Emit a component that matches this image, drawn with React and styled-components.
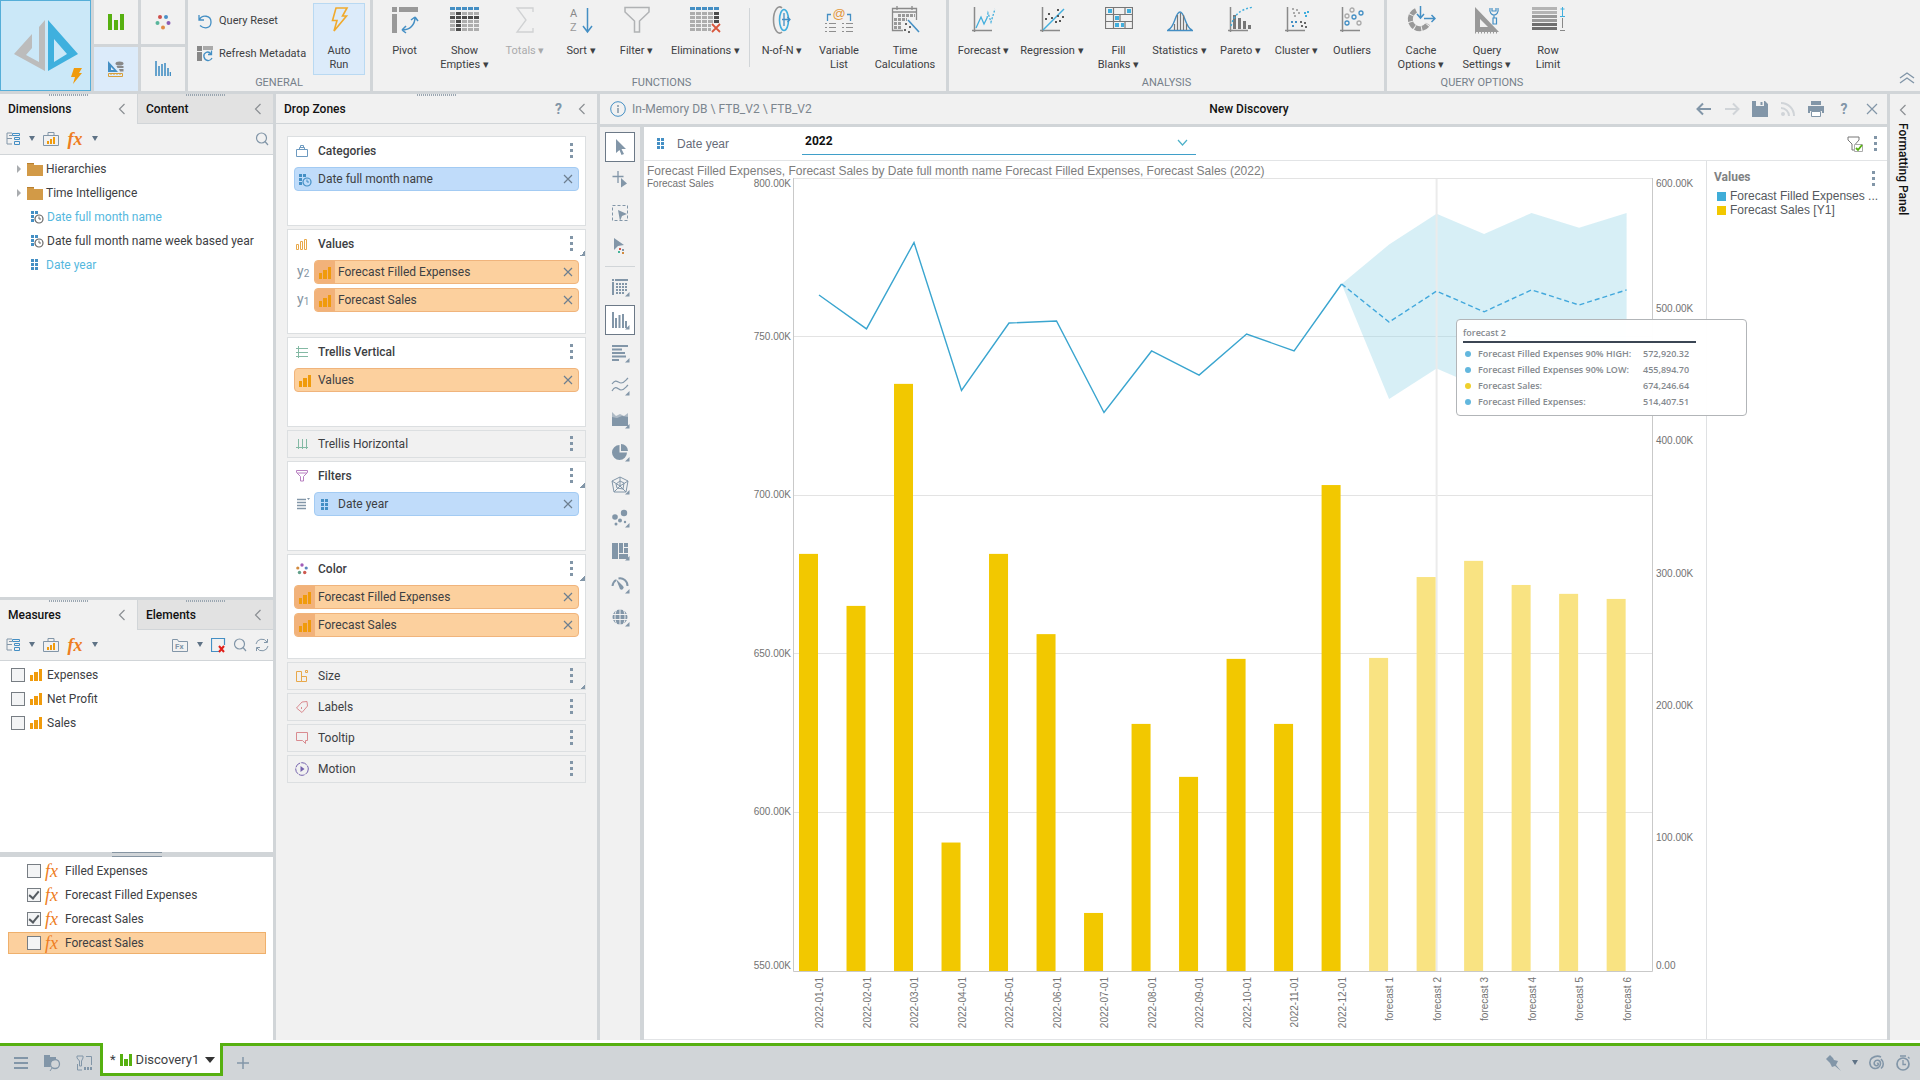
import React, { useEffect, useRef, useState } from "react";
import styled, { createGlobalStyle, css } from "styled-components";

const c = {
  panel: "#f1f1f1",
  line: "#d1d5d8",
  soft: "#dcdfe1",
  slate: "#8296a8",
  grey: "#949494",
  blue: "#448fc4",
  sky: "#41aedd",
  orange: "#f09b0c",
  text: "#3d4043",
  green: "#56b010",
};

const ui = `Roboto, "Noto Sans", sans-serif`;
const arial = `"Liberation Sans", Arial, sans-serif`;

const GlobalStyle = createGlobalStyle`
  * { box-sizing: border-box; }
  body { margin: 0; background: #fff; font: 12px/16px ${ui}; color: ${c.text}; }
  button { font: inherit; color: inherit; background: none; border: 0; padding: 0; cursor: pointer; }
  svg { display: block; flex: none; }
  h1, h2, h3, p, ul { margin: 0; padding: 0; font: inherit; list-style: none; }
`;

/* ---------- icons ---------- */

const Svg = ({ w = 16, h = w, vb, children, ...rest }) => (
  <svg width={w} height={h} viewBox={vb || `0 0 ${w} ${h}`} fill="none" aria-hidden="true" {...rest}>
    {children}
  </svg>
);

const gridCells = (cols, rows, color) => {
  const out = [];
  for (let r = 0; r < rows; r++)
    for (let k = 0; k < cols; k++)
      out.push(<rect key={`${r}-${k}`} x={k * 6} y={1 + r * 4 + (r ? 1 : 0)} width="5" height="3" fill={color(k, r)} />);
  return out;
};

const Axes = () => <path d="M4.500 1V26M2 24.500H22" stroke="#8a8a8a" strokeWidth="1.500" />;

const ribbonIcons = {
  auto: (
    <Svg w={28}>
      <path d="M11 2H22L17.500 10H21.500L9 25L12 14.500H7.500Z" stroke="#f0aa2d" strokeWidth="1.600" />
    </Svg>
  ),
  pivot: (
    <Svg w={28}>
      <path d="M1 1h5v5H1zM8 1h19v5H8zM1 8h5v19H1z" fill="#999" />
      <path d="M11 24C19 24 24 19 24 11M11 24l4-4M11 24l4 3M24 11l-4 3M24 11l3 4" stroke={c.blue} strokeWidth="1.500" />
    </Svg>
  ),
  empties: <Svg w={30} h={28}>{gridCells(5, 6, (k, r) => (r === 0 ? c.blue : r === 2 || k === 1 ? "#4b4b4b" : "#adadad"))}</Svg>,
  totals: (
    <Svg w={28}>
      <path d="M22 6V2H6L15 14L6 26H22V22" stroke="#9fa3a7" strokeWidth="1.300" />
    </Svg>
  ),
  sort: (
    <Svg w={28}>
      <text x="3" y="11" fontFamily={ui} fontSize="11" fill="#888">A</text>
      <text x="3" y="25" fontFamily={ui} fontSize="11" fill="#999">Z</text>
      <path d="M20.500 2V26M16 20L20.500 26L25 20" stroke={c.blue} strokeWidth="1.500" />
    </Svg>
  ),
  filter: (
    <Svg w={28}>
      <path d="M2 1.500H26V6L16.500 15V26H11.500V15L2 6Z" stroke="#b0b2b4" strokeWidth="1.500" />
    </Svg>
  ),
  elim: (
    <Svg w={32} h={28}>
      {gridCells(5, 6, (k, r) => (r === 0 ? c.blue : k === 4 && r < 4 ? "#4b4b4b" : "#adadad"))}
      <path d="M21 17h10v11H21z" fill={c.panel} />
      <path d="M22 18l8 8M30 18l-8 8" stroke="#d9573c" strokeWidth="1.800" />
    </Svg>
  ),
  nofn: (
    <Svg w={28}>
      <path d="M14 2C10 -2 5.500 5 5.500 14S10 30 14 26" stroke="#949494" strokeWidth="1.600" />
      <ellipse cx="16" cy="14" rx="4.500" ry="10.500" stroke={c.sky} strokeWidth="1.600" />
      <path d="M16 7V20M14 13.500H22M19.500 11l2.500 2.500L19.500 16" stroke={c.blue} strokeWidth="1.300" />
    </Svg>
  ),
  variable: (
    <Svg w={30} h={28}>
      <text x="15" y="12" textAnchor="middle" fontFamily={arial} fontSize="13" fill="#e3973c">@</text>
      <path d="M7 8.500H3.500V15M23 8.500h3.500V15" stroke={c.blue} strokeWidth="1.300" />
      <path d="M1 17.500h2M5 17.500h7M1 21.500h2M5 21.500h7M1 25.500h2M5 25.500h7M18 17.500h2M22 17.500h7M18 21.500h2M22 21.500h7M18 25.500h2M22 25.500h7" stroke="#8e8e8e" strokeWidth="1.200" />
    </Svg>
  ),
  time: (
    <Svg w={30} h={28}>
      <path d="M13 24.500H2.500V2.500H26.500V14M2.500 6H26.500M7 0v4M22 0v4" stroke="#8a8a8a" strokeWidth="1.300" />
      <path d="M8 9.500h17M4 13.500h13M4 17.500h8M4 21.500h8" stroke="#999" strokeWidth="3" strokeDasharray="3 1" />
      <path d="M18 14L29 26" stroke={c.blue} strokeWidth="1.600" />
      <path d="M15 17h2v2h-2zM19 20h2v2h-2zM14 23h2v2h-2zM18 25h2v2h-2z" fill="#666" />
    </Svg>
  ),
  forecast: (
    <Svg w={28}>
      <Axes />
      <path d="M6 22L11 11L14 18L17 12" stroke={c.sky} strokeWidth="1.300" />
      <path d="M17 12L18 7L21 16L25 3" stroke={c.sky} strokeWidth="1.300" strokeDasharray="2 1.500" />
    </Svg>
  ),
  regression: (
    <Svg w={28}>
      <Axes />
      <path d="M5 24L26 3" stroke={c.sky} strokeWidth="1.500" />
      <path d="M10 7h2v2h-2zM7 12h2v2H7zM13 11h2v2h-2zM19 3h2v2h-2zM19 9h2v2h-2zM24 10h2v2h-2zM17 15h2v2h-2zM21 14h2v2h-2z" fill="#555" />
    </Svg>
  ),
  fill: (
    <Svg w={28}>
      <path d="M.500 1.500h27v21H.500zM.500 8.500h27M.500 15.500h27M8.500 1v7M20 1v7M8.500 15v7M20 15v7M8.500 8v7M15 8v7" stroke="#777" strokeWidth="1.200" />
      <path d="M3 3h4v4H3zM22 3h4v4h-4zM10 10h4v4h-4zM10 17h4v4h-4zM16 17h3v4h-3z" fill={c.sky} />
    </Svg>
  ),
  stats: (
    <Svg w={28}>
      <path d="M1 24.500H27M2 24C9 22 9 6 14 6S19 22 26 24" stroke={c.blue} strokeWidth="1.400" />
      <path d="M8.500 18v6M11.500 9v15M14.500 7v17M17.500 9v15M20.500 18v6" stroke="#777" strokeWidth="1.200" />
    </Svg>
  ),
  pareto: (
    <Svg w={30} h={28}>
      <Axes />
      <path d="M7 9h3v14H7zM12 12h3v11h-3zM17 15h3v8h-3zM22 19h3v4h-3z" fill="#777" />
      <path d="M5 20C8 8 15 3 28 1" stroke={c.sky} strokeWidth="1.500" strokeDasharray="2 2" />
    </Svg>
  ),
  cluster: (
    <Svg w={28}>
      <Axes />
      <path d="M9 2h2v2H9zM13 3h2v2h-2zM10 6h2v2h-2zM15 6h2v2h-2zM11 9h2v2h-2z" fill="#aaa" />
      <path d="M21 6h2v2h-2zM24 5h2v2h-2zM22 9h2v2h-2z" fill={c.sky} />
      <path d="M8 15h2v2H8zM12 15h2v2h-2zM9 19h2v2H9z" fill={c.blue} />
      <path d="M17 15h2v2h-2zM21 16h2v2h-2zM18 19h2v2h-2zM22 20h2v2h-2z" fill="#666" />
    </Svg>
  ),
  outliers: (
    <Svg w={28}>
      <Axes />
      <g strokeWidth="1.300">
        <circle cx="14" cy="4" r="2" stroke="#aaa" />
        <circle cx="9" cy="10" r="2" stroke="#aaa" />
        <circle cx="21" cy="17" r="2" stroke="#aaa" />
        <circle cx="23" cy="7" r="2" stroke={c.blue} />
        <circle cx="16" cy="11" r="2" stroke={c.blue} />
        <circle cx="9" cy="17" r="2" stroke={c.blue} />
      </g>
    </Svg>
  ),
  cache: (
    <Svg w={30} h={28}>
      <path d="M10 4.500A9.500 9.500 0 1 0 22 18" stroke="#999" strokeWidth="5" strokeDasharray="6 1" />
      <path d="M14.500 0V11M11 8l3.500 4L18 8M18 12.500H29M25.500 9L29 12.500L25.500 16" stroke={c.blue} strokeWidth="1.500" />
    </Svg>
  ),
  settings: (
    <Svg w={28}>
      <path fillRule="evenodd" d="M2 1L26 26H2ZM7 13V21H15Z" fill="#999" />
      <path d="M2 26.500H26" stroke="#999" strokeWidth="2" strokeDasharray="1 2" />
      <path d="M17 2C16 7 19 9 21 9S26 7 25 2M21 9V12M21 12h2.500v6H20v-6zM19 2v3h4V2" stroke={c.blue} strokeWidth="1.200" />
    </Svg>
  ),
  row: (
    <Svg w={34} h={28}>
      <path d="M1 2.500h25M1 6.500h25" stroke="#b4b4b4" strokeWidth="3" />
      <path d="M1 10.500h25M1 14.500h25" stroke="#999" strokeWidth="3" />
      <path d="M1 18.500h25M1 22.500h25" stroke="#6e6e6e" strokeWidth="3" />
      <path d="M31.500 1v9M29 10.500h5M29.500 3h4" stroke={c.sky} />
      <path d="M31.500 12v10M29 24.500h5" stroke="#888" />
    </Svg>
  ),
};

const BarsIcon = ({ color = c.orange, size = 12 }) => (
  <Svg w={size} vb="0 0 12 12">
    <path d="M0 6h3v6H0zM4 3h4v9H4zM9 0h3v12H9z" fill={color} />
  </Svg>
);
const LevelIcon = () => (
  <Svg w={8} h={12}>
    <path d="M0 0h3v3H0zM4 0h3v3H4zM0 4h3v3H0zM4 4h3v3H4zM0 8h3v3H0zM4 8h3v3H4z" fill={c.blue} />
  </Svg>
);
const DateIcon = ({ ring = "#666" }) => (
  <Svg w={14}>
    <path d="M1 1h3v3H1zM5 1h3v3H5zM1 5h3v3H1zM1 9h3v3H1z" fill={c.blue} />
    <circle cx="9" cy="9" r="4" stroke={ring} strokeWidth="1.200" />
    <path d="M9 6.500V9h2" stroke={ring} />
  </Svg>
);
const Chevron = () => (
  <Svg w={8} h={12}>
    <path d="M6.500 1L1.500 6L6.500 11" stroke="#8b8f93" strokeWidth="1.200" />
  </Svg>
);
const Caret = ({ color = "#5f7386" }) => (
  <Svg w={8} h={6}>
    <path d="M1 0h6L4 5z" fill={color} />
  </Svg>
);
const Dots = () => (
  <Svg w={4} h={16}>
    <path d="M0 0h3v3H0zM0 6h3v3H0zM0 12h3v3H0z" fill={c.slate} />
  </Svg>
);
const Cross = ({ size = 10 }) => (
  <Svg w={size} vb="0 0 10 10">
    <path d="M1 1l8 8M9 1L1 9" stroke="#6d7f90" strokeWidth="1.200" />
  </Svg>
);
const TreeIcon = () => (
  <Svg w={14}>
    <path d="M1 1h5M1 1v11h5M1 6.500h5" stroke={c.slate} />
    <path d="M6.500 1.500h7v2h-7zM8.500 5.500h5v2h-5zM8.500 9.500h5v3h-5z" stroke={c.blue} />
    <path d="M3 3.500h3" stroke={c.slate} />
  </Svg>
);
const CaseIcon = () => (
  <Svg w={16} h={14}>
    <path d="M.500 3.500h15v10H.500zM5 3V.500h6V3" stroke={c.slate} />
    <path d="M4 9h2v3H4zM7 7h2v5H7zM10 5h2v7h-2z" fill={c.orange} />
  </Svg>
);
const SearchIcon = () => (
  <Svg w={14}>
    <circle cx="6.500" cy="6" r="5" stroke={c.slate} strokeWidth="1.200" />
    <path d="M10 9.500L13 13" stroke={c.slate} strokeWidth="1.200" />
  </Svg>
);
const FolderIcon = () => (
  <Svg w={16} h={14}>
    <path d="M0 1h7v2h9v11H0z" fill="#d29a47" />
    <path d="M0 1h7v1H0z" fill="#b98030" />
  </Svg>
);

const LogoIcon = () => (
  <Svg w={64} h={52}>
    <path d="M31 0V51L0 34L18 14V28L12 35L25 42V7Z" fill="#bcbcbc" />
    <path fillRule="evenodd" d="M34 0L64 34L34 51ZM40 19V42L53 34Z" fill="#3fb0de" />
  </Svg>
);
const BoltIcon = () => (
  <Svg w={12} h={16}>
    <path d="M3 0h8L8 5h3L2 16l2-7H0z" fill={c.orange} />
  </Svg>
);

const dotsRing = (s, colors) => (
  <Svg w={s} vb="0 0 16 16">
    <circle cx="5" cy="3" r="2" fill={colors[0]} />
    <circle cx="11" cy="3" r="2" fill={colors[1]} />
    <circle cx="2.500" cy="9" r="2" fill={colors[2]} />
    <circle cx="13.500" cy="9" r="2" fill={colors[3]} />
    <circle cx="8" cy="13.500" r="2" fill={colors[4]} />
  </Svg>
);

const moduleIcons = [
  <Svg w={16}><path d="M0 0h4v16H0zM6 6h4v10H6zM12 0h4v16h-4z" fill={c.green} /></Svg>,
  dotsRing(16, ["#cf4f4b", "#4a90c8", "#58b59b", "#8a5bb5", "#e08a45"]),
  <Svg w={16}>
    <path fillRule="evenodd" d="M0 0L10 11H0zM3 6v3h3z" fill={c.blue} />
    <ellipse cx="11.500" cy="2.500" rx="4" ry="2" fill="#888" />
    <path d="M8.500 5h7v2h-6zM11 8h4.500v2.500H12z" fill="#888" />
    <path d="M.500 12.500h14v3H.500zM3 12v2M6 12v2M9 12v2M12 12v2" stroke="#d9a03a" />
  </Svg>,
  <Svg w={16}><path d="M1 0v15M4 5v10M7 3v12M10 2v13M13 7v8M15.500 11v4" stroke={c.blue} strokeWidth="1.600" /></Svg>,
];

const ResetIcon = () => (
  <Svg w={16}>
    <path d="M2 2V7H7M2.500 6.500C5 1.500 14 2 14 9S7 16 3 12.500" stroke={c.blue} strokeWidth="1.300" />
  </Svg>
);
const RefreshMetaIcon = () => (
  <Svg w={16}>
    <path d="M0 0h5v5H0zM0 6h5v9H0z" fill="#888" />
    <path d="M6 0h10v4H6z" fill="#aaa" />
    <path d="M14 8C11 4 6 7 7 11s6 5 8 1M14.500 4.500V8.500H11" stroke={c.blue} strokeWidth="1.300" />
  </Svg>
);

const zoneIcons = {
  cat: <Svg w={12}><path d="M.500 4.500h11v7H.500zM3.500 4V2.500h5V4M4.500 2V.500h3V2" stroke="#6d9ac0" /></Svg>,
  val: <Svg w={12}><path d="M.500 6.500h2v5h-2zM4.500 3.500h2v8h-2zM8.500 1.500h2v10h-2z" stroke="#e8a84a" /></Svg>,
  tv: <Svg w={12}><path d="M2.500 0v12M0 2.500h12M0 6.500h12M0 10.500h12" stroke="#84b9a4" /></Svg>,
  th: <Svg w={12}><path d="M0 9.500h12M2.500 1v10M6.500 1v10M10.500 1v10" stroke="#84b9a4" /></Svg>,
  fil: <Svg w={12}><path d="M.500 .500h11v2L7.500 6.500V11h-3V6.500L.500 2.500zM1 3h10" stroke="#b77fc0" /></Svg>,
  col: <Svg w={12} vb="0 0 12 12"><circle cx="6" cy="2" r="1.700" fill="#a25cb8" /><circle cx="1.800" cy="5" r="1.600" fill="#d28a3f" /><circle cx="10.200" cy="5" r="1.600" fill="#5c86bd" /><circle cx="3.500" cy="9.500" r="1.700" fill="#62a08a" /><circle cx="8.700" cy="9.500" r="1.700" fill="#cf5a50" /></Svg>,
  size: <Svg w={12}><path d="M.500 1.500h5v10h-5zM5.500 6.500h5v5h-5zM9.500 .500h2v2h-2z" stroke="#e8a84a" /></Svg>,
  lab: <Svg w={12}><path d="M6 1l5-.500L11.500 5L6 11.500L.500 7zM5.500 6v2" stroke="#d98b90" /></Svg>,
  tip: <Svg w={12}><path d="M.500 .500h11v8h-2v3l-3-3h-6z" stroke="#d98b90" /></Svg>,
  mot: <Svg w={14}><circle cx="7" cy="7" r="6.300" stroke="#7462ad" strokeDasharray="6 1" /><path d="M5.500 4l4 3l-4 3z" fill="#7462ad" /></Svg>,
};

const ToolSvg = ({ children, corner = true }) => (
  <Svg w={20} vb="0 0 20 20">
    {children}
    {corner && <path d="M19.500 15v4.500H15z" fill={c.slate} />}
  </Svg>
);
const s = c.slate;
const tools = [
  { n: "Select", on: true, i: <ToolSvg corner={false}><path d="M6 2L16 12H11.500L14 17L11.500 18L9.500 13L6 16z" fill={s} /></ToolSvg> },
  { n: "Point select", i: <ToolSvg corner={false}><path d="M8 1v12M2.500 6.500h11" stroke={s} strokeWidth="1.300" /><path d="M11 8l6 5.500l-6 4z" fill={s} /></ToolSvg> },
  { n: "Lasso select", i: <ToolSvg corner={false}><path d="M2.500 2.500h15v15h-15z" stroke={s} strokeDasharray="3 2" /><path d="M8 7l9 4l-5 2l-2 5z" fill={s} /></ToolSvg> },
  { n: "Color select", i: <ToolSvg corner={false}><path d="M4 2l10 7l-6 1l-4 4z" fill={s} /><path d="M9 12h2v2H9z" fill="#cf5a50" /><path d="M12 13h2v2h-2z" fill={s} /><path d="M8 15h2v2H8z" fill="#45b39a" /><path d="M12 16h2v2h-2z" fill="#d28a3f" /></ToolSvg>, sep: true },
  { n: "Grid", i: <ToolSvg><path d="M2 3h2M5 3h13" stroke={s} strokeWidth="2" /><path d="M3 5v13" stroke={s} strokeWidth="2" /><path d="M6 7h12M6 10h12M6 13h12M6 16h9" stroke={s} strokeWidth="2" strokeDasharray="2 1" /></ToolSvg> },
  { n: "Column chart", on: true, i: <ToolSvg><path d="M3 2v16M6 8v10M9.500 5v13M13 4v14M16 11v7" stroke={s} strokeWidth="2" /></ToolSvg> },
  { n: "Bar chart", i: <ToolSvg><path d="M2 3h16M2 6.500h10M2 10h13M2 13.500h14M2 17h7" stroke={s} strokeWidth="2" /></ToolSvg> },
  { n: "Line chart", i: <ToolSvg><path d="M2 8c4-6 6-1 9-1s4-2 7-5M2 15c4-7 6-1 9-1s4-2 7-5" stroke={s} strokeWidth="1.200" /></ToolSvg> },
  { n: "Area chart", i: <ToolSvg><path d="M2 3l4 4l4-2l4 2l4-3v13H2z" fill={s} opacity=".6" /><path d="M2 8l5 1l5-2l6 1v9H2z" fill={s} /></ToolSvg> },
  { n: "Pie chart", i: <ToolSvg><path d="M9.500 3v7.500H17A7.500 7.500 0 1 1 9.500 3z" fill={s} /><path d="M11 2a7 7 0 0 1 7 7h-7z" fill={s} /></ToolSvg> },
  { n: "Radar chart", i: <ToolSvg><path d="M10 2l8 4l-2 11H4L2 6zM10 6l4 2l-1 6l-6-1l-1-4zM10 2v9M2 6l8 5l8-5M4 17l6-6l6 6" stroke={s} /></ToolSvg> },
  { n: "Scatter chart", i: <ToolSvg><circle cx="5" cy="9" r="2.800" fill={s} /><circle cx="14" cy="5" r="3.200" fill={s} /><circle cx="10" cy="12.500" r="2" fill={s} /><circle cx="6" cy="16" r="1.500" fill={s} /><circle cx="15" cy="14" r="1.200" fill={s} /></ToolSvg> },
  { n: "Tree map", i: <ToolSvg><path d="M2 2h6v16H2zM9 2h4v10H9zM14 2h4v4h-4zM14 7h4v5h-4zM9 13h9v5H9z" fill={s} /></ToolSvg> },
  { n: "Gauge", i: <ToolSvg><path d="M2.500 12A8 8 0 0 1 6 6M8.500 4.500A7.500 7.500 0 0 1 17.500 12" stroke={s} strokeWidth="2" /><path d="M6 5l7 7a2 2 0 0 1-3 3z" fill={s} /></ToolSvg> },
  { n: "Map", i: <ToolSvg><circle cx="10" cy="10" r="7.500" fill={s} /><path d="M2 7.500h16M2 12.500h16M10 2v16M6.500 3c-2 4-2 10 0 14M13.500 3c2 4 2 10 0 14" stroke={c.panel} /></ToolSvg> },
];

/* ---------- shell ---------- */

const Page = styled.div`
  display: flex;
  flex-direction: column;
  height: 100vh;
  min-width: 1600px;
  overflow: hidden;
`;

const Ribbon = styled.header`
  display: flex;
  height: 94px;
  flex: none;
  background: ${c.panel};
  border-bottom: 3px solid ${c.line};
  font-size: 11px;
`;

const LogoButton = styled.button`
  position: relative;
  width: 91px;
  display: grid;
  place-items: center;
  background: #cbe8f8;
  border: 1px solid #55aed8;
  span {
    position: absolute;
    right: 7px;
    bottom: 6px;
  }
`;

const Modules = styled.nav`
  display: grid;
  grid-template-columns: 44px 44px;
  gap: 3px;
  padding: 0 3px;
  background: ${c.line};
`;

const ModuleButton = styled.button`
  display: grid;
  place-items: center;
  background: ${(p) => (p.$on ? "#dcebfa" : c.panel)};
`;

const Group = styled.section`
  display: flex;
  flex-direction: column;
  padding: 0 1px 0 ${(p) => p.$pad || 1}px;
  border-right: ${(p) => (p.$last ? 0 : 3)}px solid ${c.line};
  h2 {
    text-align: center;
    color: #75808a;
    line-height: 16px;
  }
`;

const GroupRow = styled.div`
  display: flex;
  height: 75px;
`;

const RibbonButton = styled.button`
  display: flex;
  flex-direction: column;
  align-items: center;
  gap: 10px;
  width: ${(p) => p.$w}px;
  margin-top: ${(p) => (p.$on ? 3 : 0)}px;
  padding-top: ${(p) => (p.$on ? 2 : 6)}px;
  line-height: 14px;
  white-space: nowrap;
  opacity: ${(p) => (p.$off ? 0.4 : 1)};
  ${(p) => p.$on && css`background: #dcebfa; border: 1px solid #b9d9f2;`}
`;

const RibbonSep = styled.i`
  width: 1px;
  height: 59px;
  margin: 8px 1px 0;
  background: ${c.line};
`;

const RibbonSpace = styled.i`
  width: 4px;
`;

const QuickList = styled.div`
  display: flex;
  flex-direction: column;
  gap: 17px;
  width: 124px;
  padding: 13px 0 0 8px;
`;

const QuickButton = styled.button`
  display: flex;
  align-items: center;
  gap: 6px;
  white-space: nowrap;
`;

const RibbonEnd = styled.button`
  margin: auto 5px 6px auto;
`;

const Main = styled.main`
  display: flex;
  flex: 1;
  min-height: 0;
`;

const SideColumn = styled.aside`
  display: flex;
  flex-direction: column;
  width: 276px;
  flex: none;
  border-right: 3px solid ${c.line};
`;

const Tabs = styled.div`
  display: flex;
  height: 30px;
  flex: none;
`;

const PanelTab = styled.div`
  position: relative;
  display: flex;
  align-items: center;
  gap: 16px;
  flex: 1;
  min-width: ${(p) => (p.$first ? 137 : 0)}px;
  height: 30px;
  padding: 0 11px 0 8px;
  font-weight: 500;
  color: #111;
  background: ${(p) => (p.$dim ? "#e2e2e2" : c.panel)};
  border-bottom: ${(p) => (p.$dim || p.$line ? 1 : 0)}px solid ${c.line};
  border-left: ${(p) => (p.$dim ? 1 : 0)}px solid ${c.line};
  h2 { flex: 1; }
  &::before {
    content: "";
    position: absolute;
    top: 0;
    left: 50%;
    width: 40px;
    height: 2px;
    margin-left: -20px;
    background: repeating-linear-gradient(90deg, #9aa6b1 0 1px, transparent 1px 2px);
  }
`;

const Help = styled.button`
  font-size: 14px;
  font-weight: 700;
  color: ${c.slate};
`;

const Toolbar = styled.div`
  display: flex;
  align-items: center;
  height: 31px;
  flex: none;
  padding: 0 4px 0 6px;
  background: ${c.panel};
  border-bottom: 1px solid ${c.line};
`;

const ToolbarButton = styled.button`
  display: flex;
  align-items: center;
  gap: 8px;
  margin-right: ${(p) => p.$mr || 0}px;
`;

const Grow = styled.i`
  flex: 1;
`;

const Fx = styled.span`
  font: italic ${(p) => (p.$bold ? 700 : 400)} 18px/16px "Liberation Serif", serif;
  width: 16px;
  color: #ee7d22;
`;

const Tree = styled.ul`
  flex: 1;
  padding-top: 2px;
`;

const TreeGap = styled.i`
  width: 1px;
`;

const TreeRow = styled.li`
  display: flex;
  align-items: center;
  gap: 3px;
  height: 24px;
  padding-left: ${(p) => p.$indent}px;
  white-space: nowrap;
  color: ${(p) => (p.$used ? "#55b8de" : c.text)};
`;

const CheckRow = styled.li`
  display: flex;
  align-items: center;
  height: ${(p) => (p.$on ? 22 : 24)}px;
  margin: ${(p) => (p.$on ? "1px 7px 1px 8px" : "0 8px")};
  padding-left: ${(p) => (p.$on ? p.$indent - 1 : p.$indent)}px;
  border: ${(p) => (p.$on ? "1px solid #efb06c" : "0")};
  background: ${(p) => (p.$on ? "#fcd09e" : "none")};
  label {
    display: flex;
    align-items: center;
    gap: ${(p) => p.$gap}px;
  }
`;

const Check = styled.input`
  appearance: none;
  display: grid;
  place-items: center;
  width: 14px;
  height: 14px;
  margin: 0;
  border: 1px solid #777d83;
  background: #f3f4f5;
  &:checked::before {
    content: "";
    width: 4px;
    height: 8px;
    margin-bottom: 2px;
    border: solid #555b61;
    border-width: 0 2px 2px 0;
    transform: rotate(40deg);
  }
`;

const SplitBar = styled.div`
  display: grid;
  place-items: center;
  height: ${(p) => (p.$grip ? 5 : 3)}px;
  flex: none;
  background: ${c.line};
  &::before {
    content: "";
    display: ${(p) => (p.$grip ? "block" : "none")};
    width: 50px;
    height: 3px;
    border: solid #8695a2;
    border-width: 1px 0;
  }
`;

const SidePart = styled.section`
  display: flex;
  flex-direction: column;
  height: ${(p) => p.$h};
  flex: ${(p) => (p.$h ? "none" : 1)};
  min-height: 0;
`;

const DropColumn = styled(SideColumn)`
  width: 324px;
  background: ${c.panel};
`;

const Zones = styled.div`
  display: flex;
  flex-direction: column;
  gap: 3px;
  padding: 12px 11px;
`;

const ZoneCard = styled.section`
  position: relative;
  min-height: ${(p) => (p.$open ? 90 : 28)}px;
  padding: 0 6px ${(p) => (p.$open ? 21 : 0)}px 6px;
  background: ${(p) => (p.$open ? "#fff" : c.panel)};
  border: 1px solid ${c.soft};
  ${(p) =>
    p.$mark &&
    css`
      &::after {
        content: "";
        position: absolute;
        right: 0;
        top: 21px;
        width: 5px;
        height: 5px;
        background: linear-gradient(135deg, transparent 50%, ${c.slate} 50%);
      }
    `}
`;

const ZoneHead = styled.div`
  display: flex;
  align-items: center;
  height: ${(p) => (p.$open ? 30 : 26)}px;
  padding: 0 5px ${(p) => (p.$open ? 2 : 0)}px 1px;
  h3 {
    flex: 1;
    margin-left: 9px;
    font-weight: ${(p) => (p.$open ? 500 : 400)};
  }
`;

const ZoneSlot = styled.div`
  width: 14px;
  display: grid;
  place-items: center;
`;

const PillRow = styled.div`
  display: flex;
  align-items: center;
  margin-bottom: 4px;
  &:last-child { margin-bottom: 0; }
`;

const PillPrefix = styled.span`
  width: 20px;
  padding-left: 3px;
  font-size: 14px;
  color: #8394a3;
  sub { font-size: 10px; vertical-align: -1px; }
`;

const Pill = styled.div`
  display: flex;
  align-items: center;
  flex: 1;
  height: 24px;
  overflow: hidden;
  border-radius: 4px;
  background: ${(p) => (p.$blue ? "#c0dcfa" : "#fcd09e")};
  border: 1px solid ${(p) => (p.$blue ? "#a3cbf3" : "#f0b47c")};
  padding-right: 5px;
  > span {
    display: grid;
    place-items: center;
    width: 20px;
    height: 22px;
    padding-top: 2px;
    background: ${(p) => (p.$deep ? "#f2b27a" : "none")};
  }
  > b {
    flex: 1;
    margin-left: 3px;
    font-weight: 400;
  }
`;

const Work = styled.section`
  display: flex;
  flex-direction: column;
  flex: 1;
  min-width: 0;
`;

const WorkHead = styled.div`
  display: grid;
  grid-template-columns: 1fr auto 1fr;
  align-items: center;
  height: 33px;
  padding: 0 7px 0 10px;
  background: ${c.panel};
  border-bottom: 3px solid ${c.line};
  h1 { padding-left: 8px; color: #111; font-weight: 500; }
`;

const Crumb = styled.div`
  display: flex;
  align-items: center;
  gap: 6px;
  color: #7c868f;
`;

const HeadActions = styled.div`
  display: flex;
  justify-content: flex-end;
  gap: 12px;
  button { width: 16px; display: grid; place-items: center; }
`;

const Mark = styled.b`
  font-size: 14px;
  color: ${c.slate};
`;

const WorkBody = styled.div`
  display: flex;
  flex: 1;
  min-height: 0;
`;

const ToolStrip = styled.nav`
  display: flex;
  flex-direction: column;
  gap: 3px;
  width: 44px;
  flex: none;
  padding: 5px;
  background: ${c.panel};
  border-right: 4px solid ${c.line};
  hr { width: 30px; margin: 2px 0; border: 0; height: 1px; background: ${c.line}; }
`;

const ToolButton = styled.button`
  display: grid;
  place-items: center;
  width: 30px;
  height: 30px;
  background: ${(p) => (p.$on ? "#fff" : "none")};
  border: ${(p) => (p.$on ? 1 : 0)}px solid #6c7987;
`;

const Canvas = styled.div`
  display: flex;
  flex-direction: column;
  flex: 1;
  min-width: 0;
  background: #fff;
`;

const FilterBar = styled.div`
  display: flex;
  align-items: center;
  height: 34px;
  flex: none;
  padding: 0 9px 0 13px;
  border-bottom: 1px solid #e2e4e6;
  label { width: 125px; margin-left: 12px; padding-top: 1px; font-family: ${arial}; color: #666b78; }
`;

const SelectBox = styled.div`
  position: relative;
  width: 394px;
  margin-bottom: 4px;
  border-bottom: 1px solid #3f9fc9;
  svg { position: absolute; right: 8px; top: 10px; pointer-events: none; }
`;

const Select = styled.select`
  appearance: none;
  width: 100%;
  height: 25px;
  padding: 0 3px;
  border: 0;
  background: none;
  color: #111;
  font: 700 12px ${ui};
`;

const FilterActions = styled.div`
  display: flex;
  gap: 11px;
  margin-left: auto;
`;

const Report = styled.div`
  display: flex;
  flex: 1;
  min-height: 0;
  border-bottom: 1px solid #e2e4e6;
`;

const ChartPane = styled.div`
  position: relative;
  display: flex;
  flex-direction: column;
  flex: 1;
  min-width: 0;
  h2 {
    height: 17px;
    padding: 2px 3px 0;
    flex: none;
    font-family: ${arial};
    color: #7d7d7d;
    white-space: nowrap;
  }
`;

const Plot = styled.div`
  position: relative;
  flex: 1;
  min-height: 0;
  svg { position: absolute; inset: 0; }
  text { font: 10px ${arial}; fill: #727272; }
`;

const Tip = styled.div`
  position: absolute;
  z-index: 2;
  width: 291px;
  padding: 5px 6px;
  border: 1px solid #b2b5b8;
  border-radius: 4px;
  background: rgba(255, 255, 255, 0.97);
  font: 600 9px/16px "Open Sans", sans-serif;
  color: #84898e;
  h3 { width: 233px; border-bottom: 2px solid #3b4654; margin-bottom: 3px; }
  li { display: grid; grid-template-columns: 15px 165px 1fr; align-items: center; white-space: nowrap; }
`;

const TipDot = styled.i`
  width: 6px;
  height: 6px;
  margin-left: 2px;
  border-radius: 50%;
  background: ${(p) => p.$c};
`;

const Legend = styled.aside`
  width: 181px;
  flex: none;
  padding: 8px 11px 0 7px;
  border-left: 1px solid #dfe1e3;
  font-family: ${arial};
  color: #55595e;
  li { display: flex; align-items: center; gap: 4px; height: 14px; padding-left: 3px; white-space: nowrap; }
`;

const LegendHead = styled.div`
  display: flex;
  justify-content: space-between;
  height: 20px;
  h3 { font: 700 12px/16px ${ui}; color: #808284; }
`;

const Swatch = styled.i`
  width: 9px;
  height: 9px;
  flex: none;
  background: ${(p) => p.$c};
`;

const FormatRail = styled.aside`
  width: 33px;
  flex: none;
  display: flex;
  flex-direction: column;
  align-items: center;
  gap: 7px;
  padding: 10px 4px 0 0;
  background: ${c.panel};
  border-left: 3px solid ${c.line};
  h2 { writing-mode: vertical-rl; color: #111; font-weight: 500; }
`;

const Footer = styled.footer`
  display: flex;
  align-items: center;
  height: 37px;
  flex: none;
  margin-top: 3px;
  padding: 0 9px 0 14px;
  background: ${c.line};
  border-top: 3px solid ${c.green};
`;

const FooterIcons = styled.div`
  display: flex;
  align-items: center;
  gap: ${(p) => p.$gap}px;
  width: 86px;
`;

const SheetTab = styled.button`
  align-self: flex-start;
  display: flex;
  align-items: center;
  gap: 4px;
  height: 33px;
  margin-top: -3px;
  padding: 4px 5px 0 7px;
  background: #fff;
  border: solid ${c.green};
  border-width: 0 3px 3px;
  font-size: 13px;
  b { font-weight: 400; margin-right: 2px; }
`;

const AddSheet = styled.button`
  margin-left: 14px;
`;

/* ---------- data ---------- */

const functionsA = [
  ["pivot", 53, "Pivot"], ["empties", 67, "Show", "Empties ▾"], ["totals", 54, "Totals ▾", null, true],
  ["sort", 58, "Sort ▾"], ["filter", 53, "Filter ▾"], ["elim", 85, "Eliminations ▾"],
];
const functionsB = [["nofn", 62, "N-of-N ▾"], ["variable", 52, "Variable", "List"], ["time", 80, "Time", "Calculations"]];
const analysis = [
  ["forecast", 67, "Forecast ▾"], ["regression", 70, "Regression ▾"], ["fill", 63, "Fill", "Blanks ▾"],
  ["stats", 59, "Statistics ▾"], ["pareto", 63, "Pareto ▾"], ["cluster", 49, "Cluster ▾"], ["outliers", 62, "Outliers"],
];
const queryOptions = [["cache", 64, "Cache", "Options ▾"], ["settings", 68, "Query", "Settings ▾"], ["row", 54, "Row", "Limit"]];

const FFE = { kind: "measure", name: "Forecast Filled Expenses" };
const FS = { kind: "measure", name: "Forecast Sales" };
const zones = [
  { id: "cat", title: "Categories", items: [{ kind: "date", name: "Date full month name" }] },
  { id: "val", title: "Values", mark: true, items: [{ ...FFE, y: 2, deep: true }, { ...FS, y: 1, deep: true }] },
  { id: "tv", title: "Trellis Vertical", items: [{ kind: "measure", name: "Values" }] },
  { id: "th", title: "Trellis Horizontal" },
  { id: "fil", title: "Filters", mark: true, items: [{ kind: "level", name: "Date year", list: true }] },
  { id: "col", title: "Color", mark: true, items: [{ ...FFE, deep: true }, { ...FS, deep: true }] },
  { id: "size", title: "Size", mark: true },
  { id: "lab", title: "Labels" },
  { id: "tip", title: "Tooltip" },
  { id: "mot", title: "Motion" },
];

const months = Array.from({ length: 12 }, (_, i) => `2022-${String(i + 1).padStart(2, "0")}-01`);
const categories = [...months, ...[1, 2, 3, 4, 5, 6].map((i) => `forecast ${i}`)];
const sales = [681.5, 665.1, 735.1, 590.5, 681.5, 656.2, 568.3, 627.9, 611.2, 648.4, 627.9, 703.2, 648.7, 674.2, 679.3, 671.7, 668.9, 667.3];
const expenses = [511.5, 485.8, 551.2, 439.2, 490.3, 491.8, 422.6, 469.1, 450.9, 482, 469.1, 519.8, 491, 514.4, 498.8, 515.3, 503.9, 515.3];
const high = [519.8, 549.7, 572.9, 557.6, 573.5, 562.4, 573.5];
const low = [519.8, 432.8, 455.9, 440.4, 456.2, 445.6, 457];
const tipRows = [
  ["Forecast Filled Expenses 90% HIGH:", "572,920.32", "#62b7de"],
  ["Forecast Filled Expenses 90% LOW:", "455,894.70", "#62b7de"],
  ["Forecast Sales:", "674,246.64", "#efd02c"],
  ["Forecast Filled Expenses:", "514,407.51", "#62b7de"],
];
const legend = [
  ["Forecast Filled Expenses ...", "#3fadd8"],
  ["Forecast Sales [Y1]", "#f2c800"],
];

/* ---------- parts ---------- */

const renderRibbon = ([id, w, a, b, off]) => (
  <RibbonButton key={id} $w={w} $off={off} disabled={!!off}>
    {ribbonIcons[id]}
    <span>{a}{b && <><br />{b}</>}</span>
  </RibbonButton>
);

function TopRibbon() {
  return (
    <Ribbon>
      <LogoButton aria-label="Main menu"><LogoIcon /><span><BoltIcon /></span></LogoButton>
      <Modules>
        {moduleIcons.map((icon, i) => (
          <ModuleButton key={i} $on={i === 2} aria-label={`Module ${i + 1}`}>{icon}</ModuleButton>
        ))}
      </Modules>
      <Group>
        <GroupRow>
          <QuickList>
            <QuickButton><ResetIcon />Query Reset</QuickButton>
            <QuickButton><RefreshMetaIcon />Refresh Metadata</QuickButton>
          </QuickList>
          <RibbonButton $w={52} $on>{ribbonIcons.auto}<span>Auto<br />Run</span></RibbonButton>
          <RibbonSpace />
        </GroupRow>
        <h2>GENERAL</h2>
      </Group>
      <Group $pad={5}>
        <GroupRow>{functionsA.map(renderRibbon)}<RibbonSep />{functionsB.map(renderRibbon)}</GroupRow>
        <h2>FUNCTIONS</h2>
      </Group>
      <Group>
        <GroupRow>{analysis.map(renderRibbon)}</GroupRow>
        <h2>ANALYSIS</h2>
      </Group>
      <Group $last $pad={2}>
        <GroupRow>{queryOptions.map(renderRibbon)}</GroupRow>
        <h2>QUERY OPTIONS</h2>
      </Group>
      <RibbonEnd aria-label="Collapse ribbon">
        <Svg w={16} h={14}><path d="M1 7l7-5l7 5M1 12l7-5l7 5" stroke={c.slate} strokeWidth="1.400" /></Svg>
      </RibbonEnd>
    </Ribbon>
  );
}

const MiniTools = () => (
  <>
    <ToolbarButton $mr={7} aria-label="Tree view"><TreeIcon /><Caret /></ToolbarButton>
    <ToolbarButton $mr={8} aria-label="Sets"><CaseIcon /></ToolbarButton>
    <ToolbarButton aria-label="Formula"><Fx $bold>fx</Fx><Caret /></ToolbarButton>
    <Grow />
  </>
);

const HeaderTab = ({ children, dim }) => (
  <PanelTab $dim={dim} $first={!dim}>
    <h2>{children}</h2>
    <button aria-label={`Collapse ${children}`}><Chevron /></button>
  </PanelTab>
);

function LeftColumn() {
  return (
    <SideColumn>
      <SidePart>
        <Tabs><HeaderTab>Dimensions</HeaderTab><HeaderTab dim>Content</HeaderTab></Tabs>
        <Toolbar><MiniTools /><button aria-label="Search"><SearchIcon /></button></Toolbar>
        <Tree>
          {["Hierarchies", "Time Intelligence"].map((n) => (
            <TreeRow key={n} $indent={16}>
              <Svg w={8} h={10}><path d="M1 1l4 4l-4 4z" fill="#a9acaf" /></Svg>
              <FolderIcon />{n}
            </TreeRow>
          ))}
          <TreeRow $indent={30} $used><DateIcon />Date full month name</TreeRow>
          <TreeRow $indent={30}><DateIcon />Date full month name week based year</TreeRow>
          <TreeRow $indent={31} $used><LevelIcon /><TreeGap />Date year</TreeRow>
        </Tree>
      </SidePart>
      <SplitBar />
      <SidePart $h="252px">
        <Tabs><HeaderTab>Measures</HeaderTab><HeaderTab dim>Elements</HeaderTab></Tabs>
        <Toolbar>
          <MiniTools />
          <ToolbarButton $mr={7} aria-label="Folder formula">
            <Svg w={16} h={14}>
              <path d="M.500 13.500V1.500h5l1 2h9v10z" stroke={s} />
              <text x="3" y="11" fontSize="8" fontWeight="700" fontFamily={ui} fill={s}>Fx</text>
            </Svg>
            <Caret />
          </ToolbarButton>
          <ToolbarButton $mr={7} aria-label="Clear">
            <Svg w={15} h={16}>
              <path d="M8 14.500H.500V1.500h13V8" stroke={c.blue} strokeWidth="1.200" />
              <path d="M8 9l5 6M13 9l-5 6" stroke="#e0201b" strokeWidth="2" />
            </Svg>
          </ToolbarButton>
          <ToolbarButton $mr={8} aria-label="Search measures"><SearchIcon /></ToolbarButton>
          <ToolbarButton aria-label="Refresh">
            <Svg w={14}><path d="M1 6a6 6 0 0 1 11-2M13 8a6 6 0 0 1-11 2M9 4.500h3.500V1M5 9.500H1.500V13" stroke={s} /></Svg>
          </ToolbarButton>
        </Toolbar>
        <Tree>
          {["Expenses", "Net Profit", "Sales"].map((n) => (
            <CheckRow key={n} $indent={3} $gap={5}>
              <label><Check type="checkbox" /><BarsIcon />{n}</label>
            </CheckRow>
          ))}
        </Tree>
      </SidePart>
      <SplitBar $grip />
      <SidePart $h="183px">
        <Tree>
          {[["Filled Expenses"], ["Forecast Filled Expenses", true], ["Forecast Sales", true], ["Forecast Sales", false, true]].map(([n, on, sel], i) => (
            <CheckRow key={i} $indent={19} $gap={4} $on={sel}>
              <label><Check type="checkbox" defaultChecked={on} /><Fx>fx</Fx>{n}</label>
            </CheckRow>
          ))}
        </Tree>
      </SidePart>
    </SideColumn>
  );
}

const pillIcon = { measure: <BarsIcon />, date: <DateIcon ring={c.blue} />, level: <LevelIcon /> };

function DropZones() {
  return (
    <DropColumn>
      <Tabs>
        <PanelTab $line>
          <h2>Drop Zones</h2>
          <Help aria-label="Help">?</Help>
          <button aria-label="Collapse drop zones"><Chevron /></button>
        </PanelTab>
      </Tabs>
      <Zones>
        {zones.map((z) => (
          <ZoneCard key={z.id} $open={!!z.items} $mark={z.mark}>
            <ZoneHead $open={!!z.items}>
              <ZoneSlot>{zoneIcons[z.id]}</ZoneSlot>
              <h3>{z.title}</h3>
              <button aria-label={`${z.title} menu`}><Dots /></button>
            </ZoneHead>
            {z.items && (
              <div>
                {z.items.map((it) => (
                  <PillRow key={it.name}>
                    {it.y && <PillPrefix>y<sub>{it.y}</sub></PillPrefix>}
                    {it.list && (
                      <PillPrefix><Svg w={13} h={12}><path d="M0 1.500h9M0 4.500h9M0 7.500h9M0 10.500h9" stroke={s} strokeWidth="1.300" /><path d="M10 0h3l-1.500 2z" fill={s} /></Svg></PillPrefix>
                    )}
                    <Pill $blue={it.kind !== "measure"} $deep={it.deep}>
                      <span>{pillIcon[it.kind]}</span>
                      <b>{it.name}</b>
                      <button aria-label={`Remove ${it.name}`}><Cross /></button>
                    </Pill>
                  </PillRow>
                ))}
              </div>
            )}
          </ZoneCard>
        ))}
      </Zones>
    </DropColumn>
  );
}

function Chart() {
  const box = useRef(null);
  const [size, setSize] = useState({ w: 1062, h: 861 });
  useEffect(() => {
    const ro = new ResizeObserver(([e]) => setSize({ w: Math.round(e.contentRect.width), h: Math.round(e.contentRect.height) }));
    ro.observe(box.current);
    return () => ro.disconnect();
  }, []);
  const { w, h } = size;
  const left = 150;
  const right = w - 54;
  const bottom = h - 68;
  const step = (right - left) / 18.06;
  const x = (i) => left + 25 + i * step;
  const yl = (v) => ((800 - v) / 250) * bottom;
  const yr = (v) => ((600 - v) / 600) * bottom;
  const pts = (arr, from = 0) => arr.map((v, i) => `${x(i + from).toFixed(1)},${yr(v).toFixed(1)}`).join(" ");
  const labelY = (y) => Math.min(Math.max(y + 3, 9), bottom - 2);
  return (
    <Plot ref={box}>
      <svg width={w} height={h} role="img" aria-label="Forecast chart">
        {[750, 700, 650, 600].map((v) => (
          <path key={v} d={`M${left} ${Math.floor(yl(v)) + 0.5}H${right}`} stroke="#e3e3e3" />
        ))}
        <polygon points={`${pts(high, 11)} ${pts(low, 11).split(" ").reverse().join(" ")}`} fill="#9bd6e8" fillOpacity=".4" />
        <path d={`M${x(13)} 0V${bottom}`} stroke="#ebebeb" strokeWidth="2" />
        {sales.map((v, i) => (
          <rect key={i} x={x(i) - 20} y={yl(v)} width="19" height={bottom - yl(v)} fill={i < 12 ? "#f2c800" : "#f9e382"} />
        ))}
        <path d={`M${left} .500H${right}`} stroke="#e3e3e3" />
        <path d={`M${left - 0.5} 0V${bottom + 0.5}H${right + 0.5}V0`} stroke="#c9c9c9" fill="none" />
        <polyline points={pts(expenses.slice(0, 12))} fill="none" stroke="#3aa5cf" strokeWidth="1.400" />
        <polyline points={pts(expenses.slice(11), 11)} fill="none" stroke="#42a8dc" strokeWidth="1.400" strokeDasharray="5 3" />
        <text x="3" y="9">Forecast Sales</text>
        {[800, 750, 700, 650, 600, 550].map((v) => (
          <text key={v} x={left - 3} y={labelY(yl(v))} textAnchor="end">{v}.00K</text>
        ))}
        {[600, 500, 400, 300, 200, 100, 0].map((v) => (
          <text key={v} x={right + 4} y={labelY(yr(v) - 1)}>{v ? `${v}.00K` : "0.00"}</text>
        ))}
        {categories.map((t, i) => (
          <text key={t} transform={`translate(${Math.round(x(i)) + 4} ${bottom + 6}) rotate(-90)`} textAnchor="end">{t}</text>
        ))}
      </svg>
      <Tip style={{ left: Math.round(x(13)) + 19, top: Math.round(yl(755.5)) }}>
        <h3>forecast 2</h3>
        <ul>
          {tipRows.map(([k, v, col]) => (
            <li key={k}><TipDot $c={col} /><span>{k}</span><span>{v}</span></li>
          ))}
        </ul>
      </Tip>
    </Plot>
  );
}

const headActions = [
  ["Back", <Svg w={16}><path d="M15 8H2M7 2.500L1.500 8L7 13.500" stroke={s} strokeWidth="2" /></Svg>],
  ["Forward", <Svg w={16}><path d="M1 8H14M9 2.500L14.500 8L9 13.500" stroke="#d0d4d8" strokeWidth="2" /></Svg>],
  ["Save", <Svg w={16}><path fillRule="evenodd" d="M0 0h13l3 3v13H0zM4 0v5h8V0zM8.500 1v3h2V1z" fill={s} /></Svg>],
  ["Feed", <Svg w={16}><circle cx="3" cy="13" r="2" fill="#d0d4d8" /><path d="M1 7a8 8 0 0 1 8 8M1 2a13 13 0 0 1 13 13" stroke="#d0d4d8" strokeWidth="2" /></Svg>],
  ["Print", <Svg w={16}><path d="M3 0h10v4H3zM0 5h16v7h-2v-2H2v2H0z" fill={s} /><path d="M3.500 10.500h9v5h-9z" fill="#fff" stroke={s} /></Svg>],
  ["Help", <Mark>?</Mark>],
  ["Close", <Svg w={12}><path d="M1 1l10 10M11 1L1 11" stroke={s} strokeWidth="1.200" /></Svg>],
];

function Workspace() {
  return (
    <Work>
      <WorkHead>
        <Crumb>
          <Svg w={16}><circle cx="8" cy="8" r="7.300" stroke={c.blue} /><path d="M8 4v2M8 7v5" stroke={s} strokeWidth="1.500" /></Svg>
          In-Memory DB \ FTB_V2 \ FTB_V2
        </Crumb>
        <h1>New Discovery</h1>
        <HeadActions>
          {headActions.map(([n, icon]) => <button key={n} aria-label={n}>{icon}</button>)}
        </HeadActions>
      </WorkHead>
      <WorkBody>
        <ToolStrip>
          {tools.map((t) => (
            <React.Fragment key={t.n}>
              <ToolButton $on={t.on} aria-label={t.n}>{t.i}</ToolButton>
              {t.sep && <hr />}
            </React.Fragment>
          ))}
        </ToolStrip>
        <Canvas>
          <FilterBar>
            <LevelIcon />
            <label htmlFor="year">Date year</label>
            <SelectBox>
              <Select id="year" defaultValue="2022"><option>2022</option></Select>
              <Svg w={11} h={7}><path d="M1 1l4.500 5L10 1" stroke="#4db1c9" strokeWidth="1.200" /></Svg>
            </SelectBox>
            <FilterActions>
              <button aria-label="Filter options">
                <Svg w={16}><path d="M1 1h11v3L8.500 8v6H5V8L1 4z" stroke="#777" /><path d="M7.500 8.500h8v7h-8z" fill="#fff" stroke="#aaa" /><path d="M9 12l2 2l4-5" stroke={c.green} strokeWidth="1.800" /></Svg>
              </button>
              <button aria-label="Menu"><Dots /></button>
            </FilterActions>
          </FilterBar>
          <Report>
            <ChartPane>
              <h2>Forecast Filled Expenses, Forecast Sales by Date full month name Forecast Filled Expenses, Forecast Sales (2022)</h2>
              <Chart />
            </ChartPane>
            <Legend>
              <LegendHead><h3>Values</h3><button aria-label="Legend menu"><Dots /></button></LegendHead>
              <ul>
                {legend.map(([t, col]) => <li key={t}><Swatch $c={col} />{t}</li>)}
              </ul>
            </Legend>
          </Report>
        </Canvas>
      </WorkBody>
    </Work>
  );
}

function BottomBar() {
  return (
    <Footer>
      <FooterIcons $gap={15}>
        <button aria-label="Menu"><Svg w={14} h={12}><path d="M0 1h14M0 6h14M0 11h14" stroke={s} strokeWidth="2" /></Svg></button>
        <button aria-label="Browse"><Svg w={18} h={16}><path d="M1 0h6v2h6v3C8 5 6 9 8 12H1z" fill={s} /><circle cx="12" cy="9" r="4.500" stroke={s} strokeWidth="1.300" /><path d="M9 13l-2 3" stroke={s} /></Svg></button>
        <button aria-label="Filters"><Svg w={16}><path d="M1 1h6v2L5.500 6v5h-2V6L1 3zM10 1.500h5.500V10M1.500 9v6H6" stroke={s} /><path d="M8 12h2v3H8zM11 12h2v3h-2zM14 12h2v3h-2z" fill={s} /></Svg></button>
      </FooterIcons>
      <SheetTab>
        <span>*</span>
        <Svg w={12}><path d="M0 0h3v12H0zM4 5h4v7H4zM9 0h3v12H9z" fill={c.green} /></Svg>
        <b>Discovery1</b>
        <Svg w={10} h={7}><path d="M0 0h10L5 6z" fill="#333" /></Svg>
      </SheetTab>
      <AddSheet aria-label="Add sheet"><Svg w={12}><path d="M6 0v12M0 6h12" stroke={s} strokeWidth="1.500" /></Svg></AddSheet>
      <Grow />
      <FooterIcons $gap={10}>
        <button aria-label="Pin"><Svg w={16}><path d="M1 4l4-4l3 3l1 2l4 1l-2 4l5 6l-6-5l-3 1l-2-4z" fill={s} /></Svg></button>
        <Caret />
        <button aria-label="Spiral"><Svg w={16}><path d="M8 8.500c1-1 2 1 .500 2c-2 1-4-1-3-3.500c1.500-3 6-2 6 1.500c0 4-4 6-7.500 4.500C0 11 0 5 3 3s7-2 9-1M12 4c3 3 3 7 0 9.500" stroke={s} strokeWidth="1.600" /></Svg></button>
        <button aria-label="Timer"><Svg w={16}><circle cx="8" cy="9" r="6" stroke={s} strokeWidth="1.700" /><path d="M5 1h6M8 5v4.500h3M13 2l1.500 1.500" stroke={s} strokeWidth="1.300" /></Svg></button>
      </FooterIcons>
    </Footer>
  );
}

export default function App() {
  return (
    <Page>
      <GlobalStyle />
      <TopRibbon />
      <Main>
        <LeftColumn />
        <DropZones />
        <Workspace />
        <FormatRail>
          <button aria-label="Expand formatting panel"><Chevron /></button>
          <h2>Formatting Panel</h2>
        </FormatRail>
      </Main>
      <BottomBar />
    </Page>
  );
}
